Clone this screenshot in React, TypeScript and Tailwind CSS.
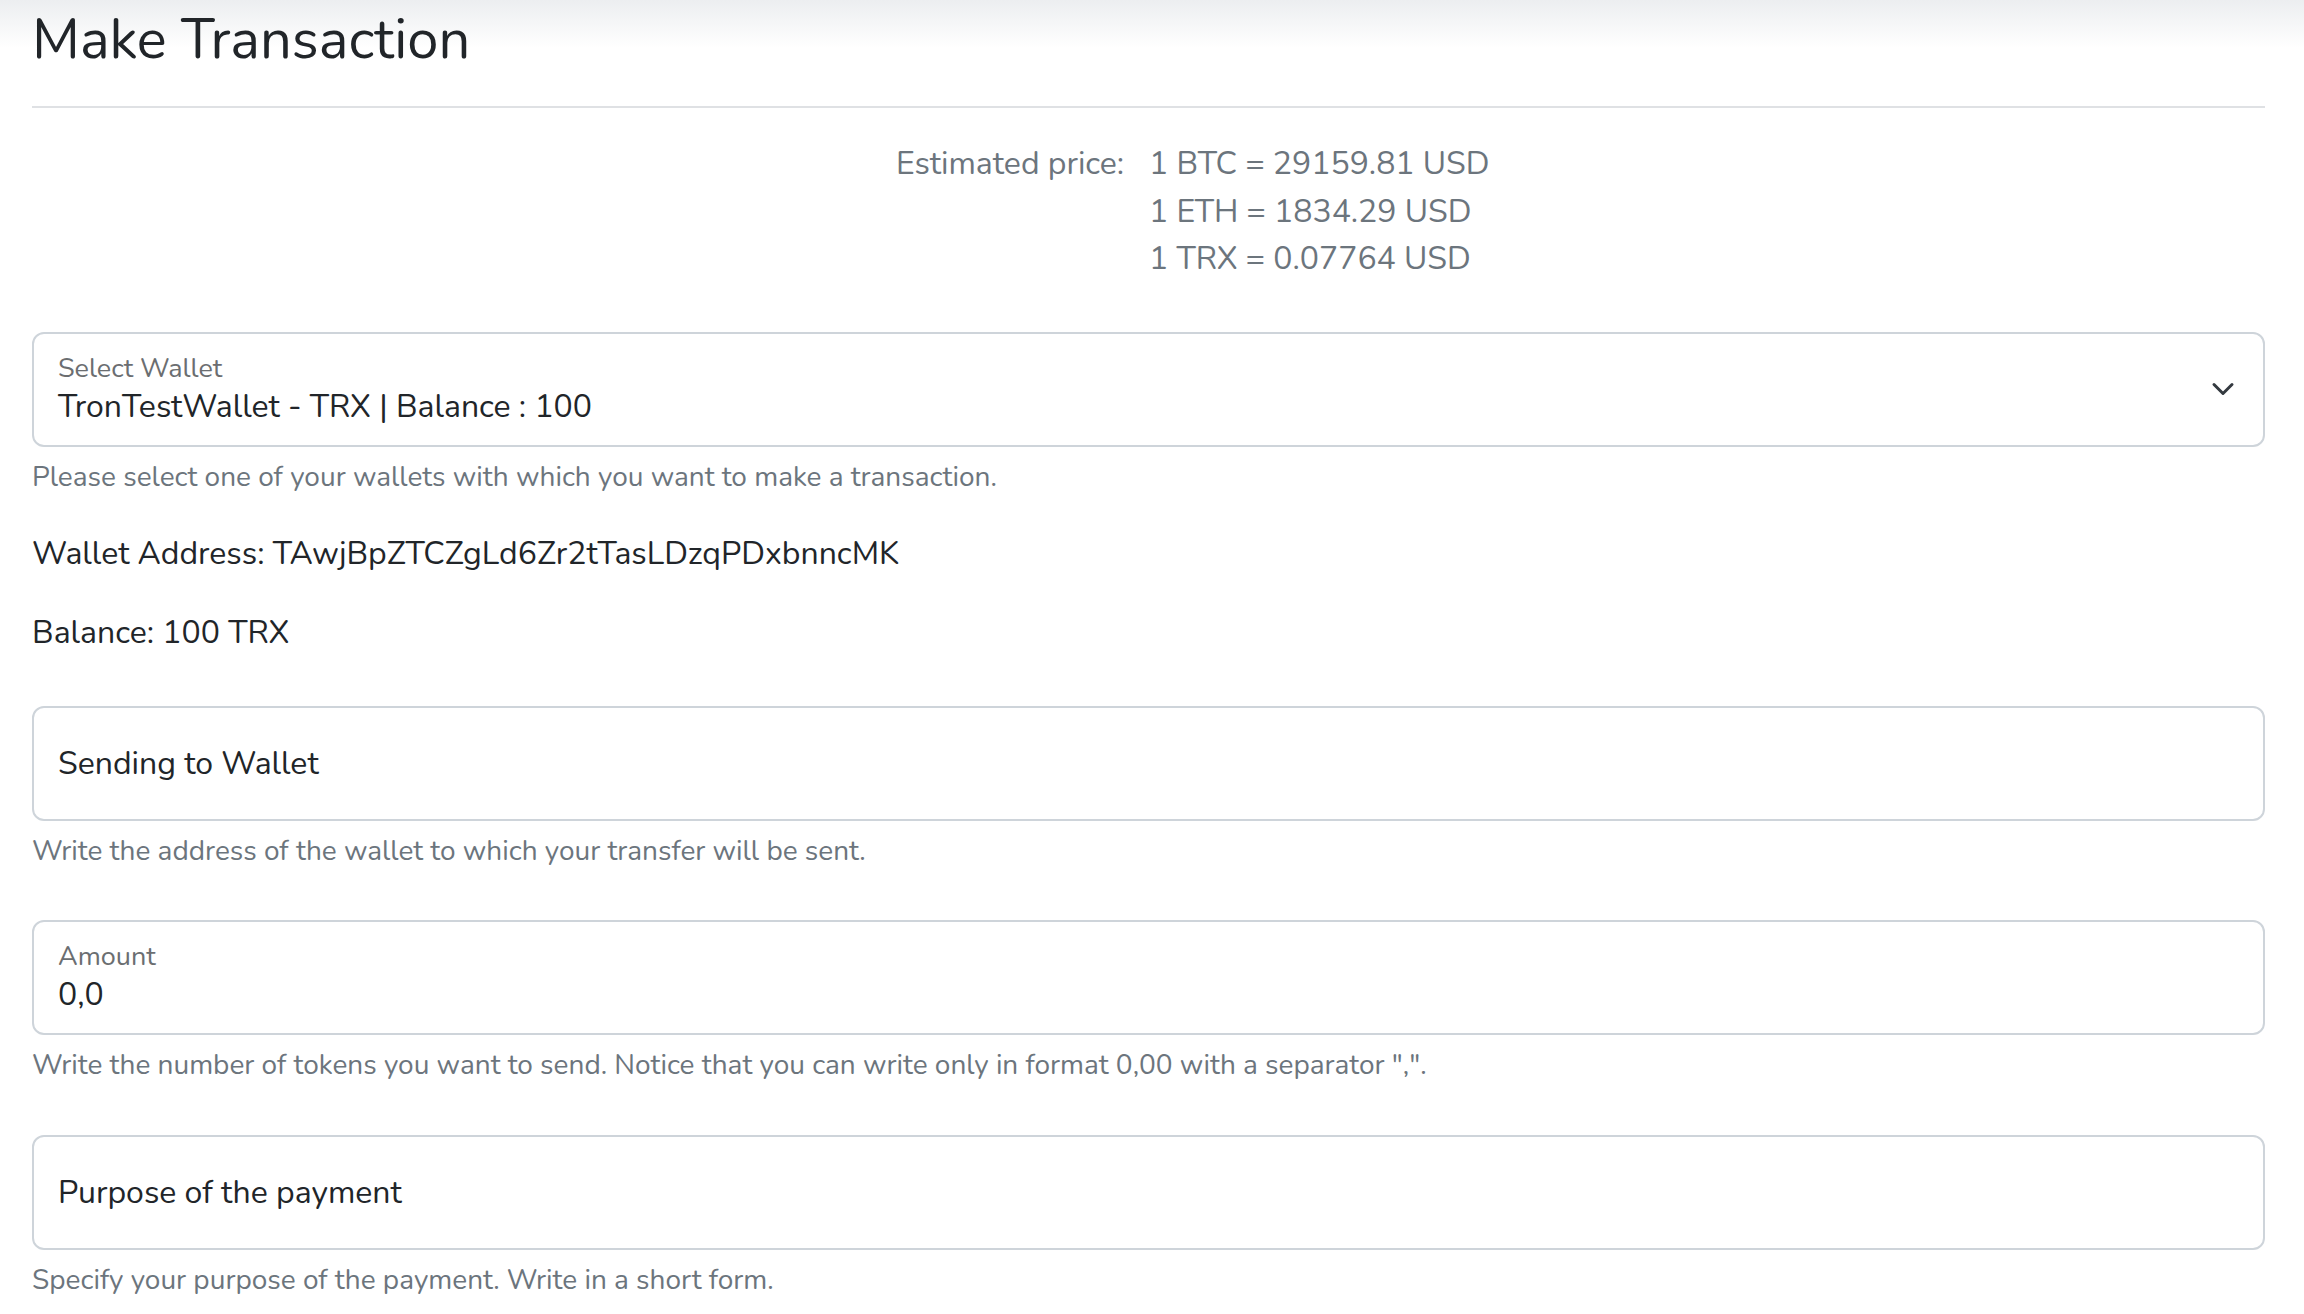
import React from 'react'

const font = { fontFamily: 'Nunito, Lato, "Noto Sans", sans-serif' }

function HelpText({ children }: { children: React.ReactNode }) {
  return <div className="mt-[10px] text-[28px] leading-[41px] text-[#6c757d]">{children}</div>
}

function FloatingField({ label, value }: { label: string; value: string }) {
  return (
    <div className="flex h-[115px] flex-col justify-center rounded-[12px] border-2 border-[#ced4da] bg-white px-[24px] pt-[1px]">
      <div className="text-[27px] leading-[34px] text-[#6b6e71]">{label}</div>
      <div className="text-[32px] leading-[42px] text-[#212529]">{value}</div>
    </div>
  )
}

function PlainField({ text }: { text: string }) {
  return (
    <div className="flex h-[115px] items-center rounded-[12px] border-2 border-[#ced4da] bg-white px-[24px]">
      <span className="text-[32px] leading-[47px] text-[#212529]">{text}</span>
    </div>
  )
}

function WalletSelect() {
  return (
    <div className="flex h-[115px] items-center justify-between rounded-[12px] border-2 border-[#ced4da] bg-white pl-[24px] pr-[24px]">
      <div className="flex flex-col pt-[1px]">
        <div className="text-[27px] leading-[34px] text-[#6b6e71]">Select Wallet</div>
        <div className="text-[32px] leading-[42px] text-[#212529]">TronTestWallet - TRX | Balance : 100</div>
      </div>
      <svg width="32" height="24" viewBox="0 0 16 16" fill="none">
        <path d="m2 5 6 6 6-6" stroke="#343a40" strokeWidth="2" strokeLinecap="round" strokeLinejoin="round" />
      </svg>
    </div>
  )
}

export default function App() {
  const prices = ['1 BTC = 29159.81 USD', '1 ETH = 1834.29 USD', '1 TRX = 0.07764 USD']

  return (
    <div
      className="min-h-[1314px] w-[2304px] bg-[linear-gradient(to_bottom,#eceef0_0px,#ffffff_48px)] text-[#212529]"
      style={font}
    >
      <div className="ml-[32px] w-[2233px]">
        <h3 className="pt-[7px] text-[56px] font-normal leading-[66px] text-[#212529]">Make Transaction</h3>
        <div className="mt-[33px] h-[2px] bg-[#dfe1e4]" />

        <div className="mt-[32px] flex pl-[864px] text-[32px] leading-[47.5px] text-[#6c757d]">
          <div className="w-[253px]">Estimated price:</div>
          <div className="flex flex-col">
            {prices.map((p) => (
              <div key={p}>{p}</div>
            ))}
          </div>
        </div>

        <div className="mt-[49px]">
          <WalletSelect />
          <HelpText>Please select one of your wallets with which you want to make a transaction.</HelpText>
        </div>

        <p className="mt-[32px] text-[32px] leading-[47.5px]">Wallet Address: TAwjBpZTCZgLd6Zr2tTasLDzqPDxbnncMK</p>
        <p className="mt-[32px] text-[32px] leading-[47.5px]">Balance: 100 TRX</p>

        <div className="mt-[49px]">
          <PlainField text="Sending to Wallet" />
          <HelpText>Write the address of the wallet to which your transfer will be sent.</HelpText>
        </div>

        <div className="mt-[48px]">
          <FloatingField label="Amount" value="0,0" />
          <HelpText>
            Write the number of tokens you want to send. Notice that you can write only in format 0,00 with a separator ",".
          </HelpText>
        </div>

        <div className="mt-[49px]">
          <PlainField text="Purpose of the payment" />
          <HelpText>Specify your purpose of the payment. Write in a short form.</HelpText>
        </div>
      </div>
    </div>
  )
}
